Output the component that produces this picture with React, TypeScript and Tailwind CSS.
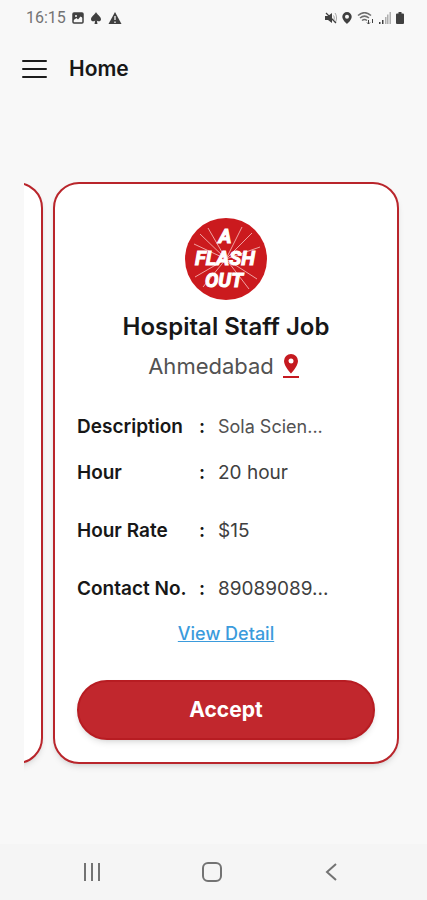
import React from 'react';

const rays = [
  [24, 25], [18, 35], [76, 24], [84, 38], [32, 19], [19, 68], [27, 78], [81, 70], [73, 80], [66, 18],
];

const details = [
  { label: 'Description', value: 'Sola Scien...', row: 'h-[46px] pb-3', text: 'text-lg text-neutral-600' },
  { label: 'Hour', value: '20 hour', row: 'h-[46px] pb-3', text: 'text-[19px] text-neutral-700' },
  { label: 'Hour Rate', value: '$15', row: 'h-[58px]', text: 'text-[19px] text-neutral-700' },
  { label: 'Contact No.', value: '89089089...', row: 'h-[58px]', text: 'text-[19px] text-neutral-700' },
];

const StatusBar: React.FC = () => (
  <div className="flex h-9 items-center justify-between pl-[26px] pr-[23px] text-neutral-700">
    <div className="flex items-center gap-[6px]">
      <span className="font-[Roboto,sans-serif] text-base text-neutral-500">16:15</span>
      <svg className="h-3 w-3" viewBox="0 0 12 12" fill="none">
        <rect x="1" y="1" width="10" height="10" rx="1" stroke="currentColor" strokeWidth="1.5" />
        <path d="M1 1h10v5L8.500 4.500 6 7.500 4.500 6 1 8.500z" fill="currentColor" />
        <circle cx="4" cy="4" r="1" fill="#f8f8f8" />
      </svg>
      <svg className="h-3 w-3" viewBox="0 0 12 12" fill="currentColor">
        <path d="M6 0C5 2.500 1 4.500 1 7.200c0 2.300 2.800 2.600 4.200 1.200L4.500 12h3l-.7-3.600C8.200 9.800 11 9.500 11 7.200 11 4.500 7 2.500 6 0z" />
      </svg>
      <svg className="h-3 w-[14px]" viewBox="0 0 14 12">
        <path d="M7 0l6.500 12H.5z" fill="currentColor" />
        <path d="M7 4v4M7 9.500V11" stroke="#f8f8f8" strokeWidth="1.300" />
      </svg>
    </div>
    <div className="flex items-center gap-[5px]">
      <svg className="h-3 w-3" viewBox="0 0 12 12" fill="none" stroke="currentColor">
        <path d="M0 4h3l4-3v10L3 8H0z" fill="currentColor" stroke="none" />
        <path d="M1 1l10 10" strokeWidth="1.200" />
        <path d="M8.500 3.500c1 1.500 1 3.500 0 5M10 1c2 3 2 7 0 10" opacity=".45" />
      </svg>
      <svg className="h-3 w-[10px]" viewBox="0 0 10 12" fill="currentColor">
        <path fillRule="evenodd" d="M5 0a4.700 4.700 0 0 0-4.700 4.700C.3 8 5 12 5 12s4.700-4 4.700-7.300A4.700 4.700 0 0 0 5 0zm0 2.700a2 2 0 1 1 0 4 2 2 0 0 1 0-4z" />
      </svg>
      <svg className="h-[13px] w-[17px]" viewBox="0 0 17 13" fill="none" stroke="currentColor">
        <path d="M1 3.500c4-3.500 9-3.500 13 0M3 6c3-2.500 6-2.500 9 0M5 8.500c2-1.500 3-1.500 5 0" strokeWidth="1.500" opacity=".75" />
        <path d="M11.500 8v4M10 10.500l1.500 1.500 1.500-1.500M15.500 11V7" />
      </svg>
      <svg className="h-3 w-3" viewBox="0 0 12 12" fill="currentColor">
        <path d="M0 10h1.500v2H0zM3 8h1.500v4H3z" />
        <path d="M6 5h1.500v7H6zM8 2.500h1.500V12H8zM10.500 0H12v12h-1.500z" opacity=".4" />
      </svg>
      <svg className="h-3 w-2" viewBox="0 0 8 12" fill="currentColor">
        <path d="M2.500 0h3v1.500H7a1 1 0 0 1 1 1V11a1 1 0 0 1-1 1H1a1 1 0 0 1-1-1V2.500a1 1 0 0 1 1-1h1.500z" />
      </svg>
    </div>
  </div>
);

const Logo: React.FC = () => (
  <svg className="h-[84px] w-[84px]" viewBox="8 8 84 84" role="img" aria-label="A Flash Out">
    <circle cx="50" cy="50" r="41" fill="#cb1a1e" />
    {rays.map(([x, y]) => (
      <path key={`${x}-${y}`} d={`M50 50L${x} ${y}`} stroke="#f0a3a3" strokeWidth="1" />
    ))}
    <text
      className="font-[Roboto,sans-serif] text-[20px] font-bold italic"
      fill="#fff"
      stroke="#fff"
      strokeWidth="1"
      textAnchor="middle"
    >
      <tspan x="49" y="34">A</tspan>
      <tspan x="49" y="56">FLASH</tspan>
      <tspan x="48" y="78">OUT</tspan>
    </text>
  </svg>
);

const JobCard: React.FC = () => (
  <article className="flex w-[calc(100%-29px)] shrink-0 flex-col items-center rounded-[26px] border-2 border-[#b9252b] bg-white px-[22px] pb-[22px] pt-[33px] shadow-md">
    <Logo />
    <h2 className="mt-2 text-2xl leading-9 font-semibold text-neutral-900">Hospital Staff Job</h2>
    <p className="mt-[3px] flex items-center gap-2 pr-1 text-[22px] leading-9 text-neutral-600">
      Ahmedabad
      <svg className="h-6 w-[18px]" viewBox="0 0 18 24" fill="#c51a20">
        <path fillRule="evenodd" d="M9 0a7 7 0 0 0-7 7c0 5.500 7 12.500 7 12.500S16 12.500 16 7a7 7 0 0 0-7-7zm0 4.500a2.500 2.500 0 1 1 0 5 2.500 2.500 0 0 1 0-5z" />
        <path d="M1 22h16v2H1z" />
      </svg>
    </p>
    <dl className="mt-[26px] w-full">
      {details.map(({ label, value, row, text }) => (
        <div key={label} className={`flex items-center ${row}`}>
          <dt className="flex w-[141px] shrink-0 text-[19px] font-semibold text-neutral-900">
            <span className="w-[122px]">{label}</span>
            <span aria-hidden="true">:</span>
          </dt>
          <dd className={text}>{value}</dd>
        </div>
      ))}
    </dl>
    <a href="#detail" className="mt-1 text-lg leading-6 font-medium text-[#3b9bdc] underline">View Detail</a>
    <button className="mt-[34px] h-[60px] w-full rounded-full border-2 border-[#b71c22] bg-[#c1272d] text-[21px] font-bold text-white shadow-md">
      Accept
    </button>
  </article>
);

const App: React.FC = () => {
  return (
    <div className="flex min-h-screen flex-col bg-[#f8f8f8] font-[Inter,sans-serif]">
      <StatusBar />
      <header className="flex h-[66px] items-center gap-[22px] px-[22px]">
        <button aria-label="Open menu">
          <svg className="h-[18px] w-[25px]" viewBox="0 0 25 18" fill="none" stroke="#1c1c1c" strokeWidth="2" strokeLinecap="round">
            <path d="M1 1h23M1 9h23M1 17h23" />
          </svg>
        </button>
        <h1 className="text-[21px] font-semibold text-neutral-900">Home</h1>
      </header>
      <main className="flex flex-1 items-center">
        <div className="ml-6 flex min-w-0 flex-1 justify-end gap-[10px] overflow-hidden py-4 pr-7">
          <div aria-hidden="true" className="w-[calc(100%-29px)] shrink-0 rounded-[26px] border-2 border-[#b9252b] bg-white shadow-md" />
          <JobCard />
        </div>
      </main>
      <nav className="flex h-14 items-center justify-between bg-[#f5f5f5] pl-[82px] pr-[86px] text-neutral-500">
        <button aria-label="Recent apps">
          <svg className="h-5 w-5" viewBox="0 0 20 20" fill="none" stroke="currentColor" strokeWidth="2">
            <path d="M3 1v18M10 1v18M17 1v18" />
          </svg>
        </button>
        <button aria-label="Home screen">
          <svg className="h-5 w-5" viewBox="0 0 20 20" fill="none" stroke="currentColor" strokeWidth="2">
            <rect x="1" y="1" width="18" height="18" rx="5" />
          </svg>
        </button>
        <button aria-label="Back">
          <svg className="h-5 w-5" viewBox="0 0 20 20" fill="none" stroke="currentColor" strokeWidth="2">
            <path d="M15 2l-9 8 9 8" />
          </svg>
        </button>
      </nav>
    </div>
  );
};

export default App;
